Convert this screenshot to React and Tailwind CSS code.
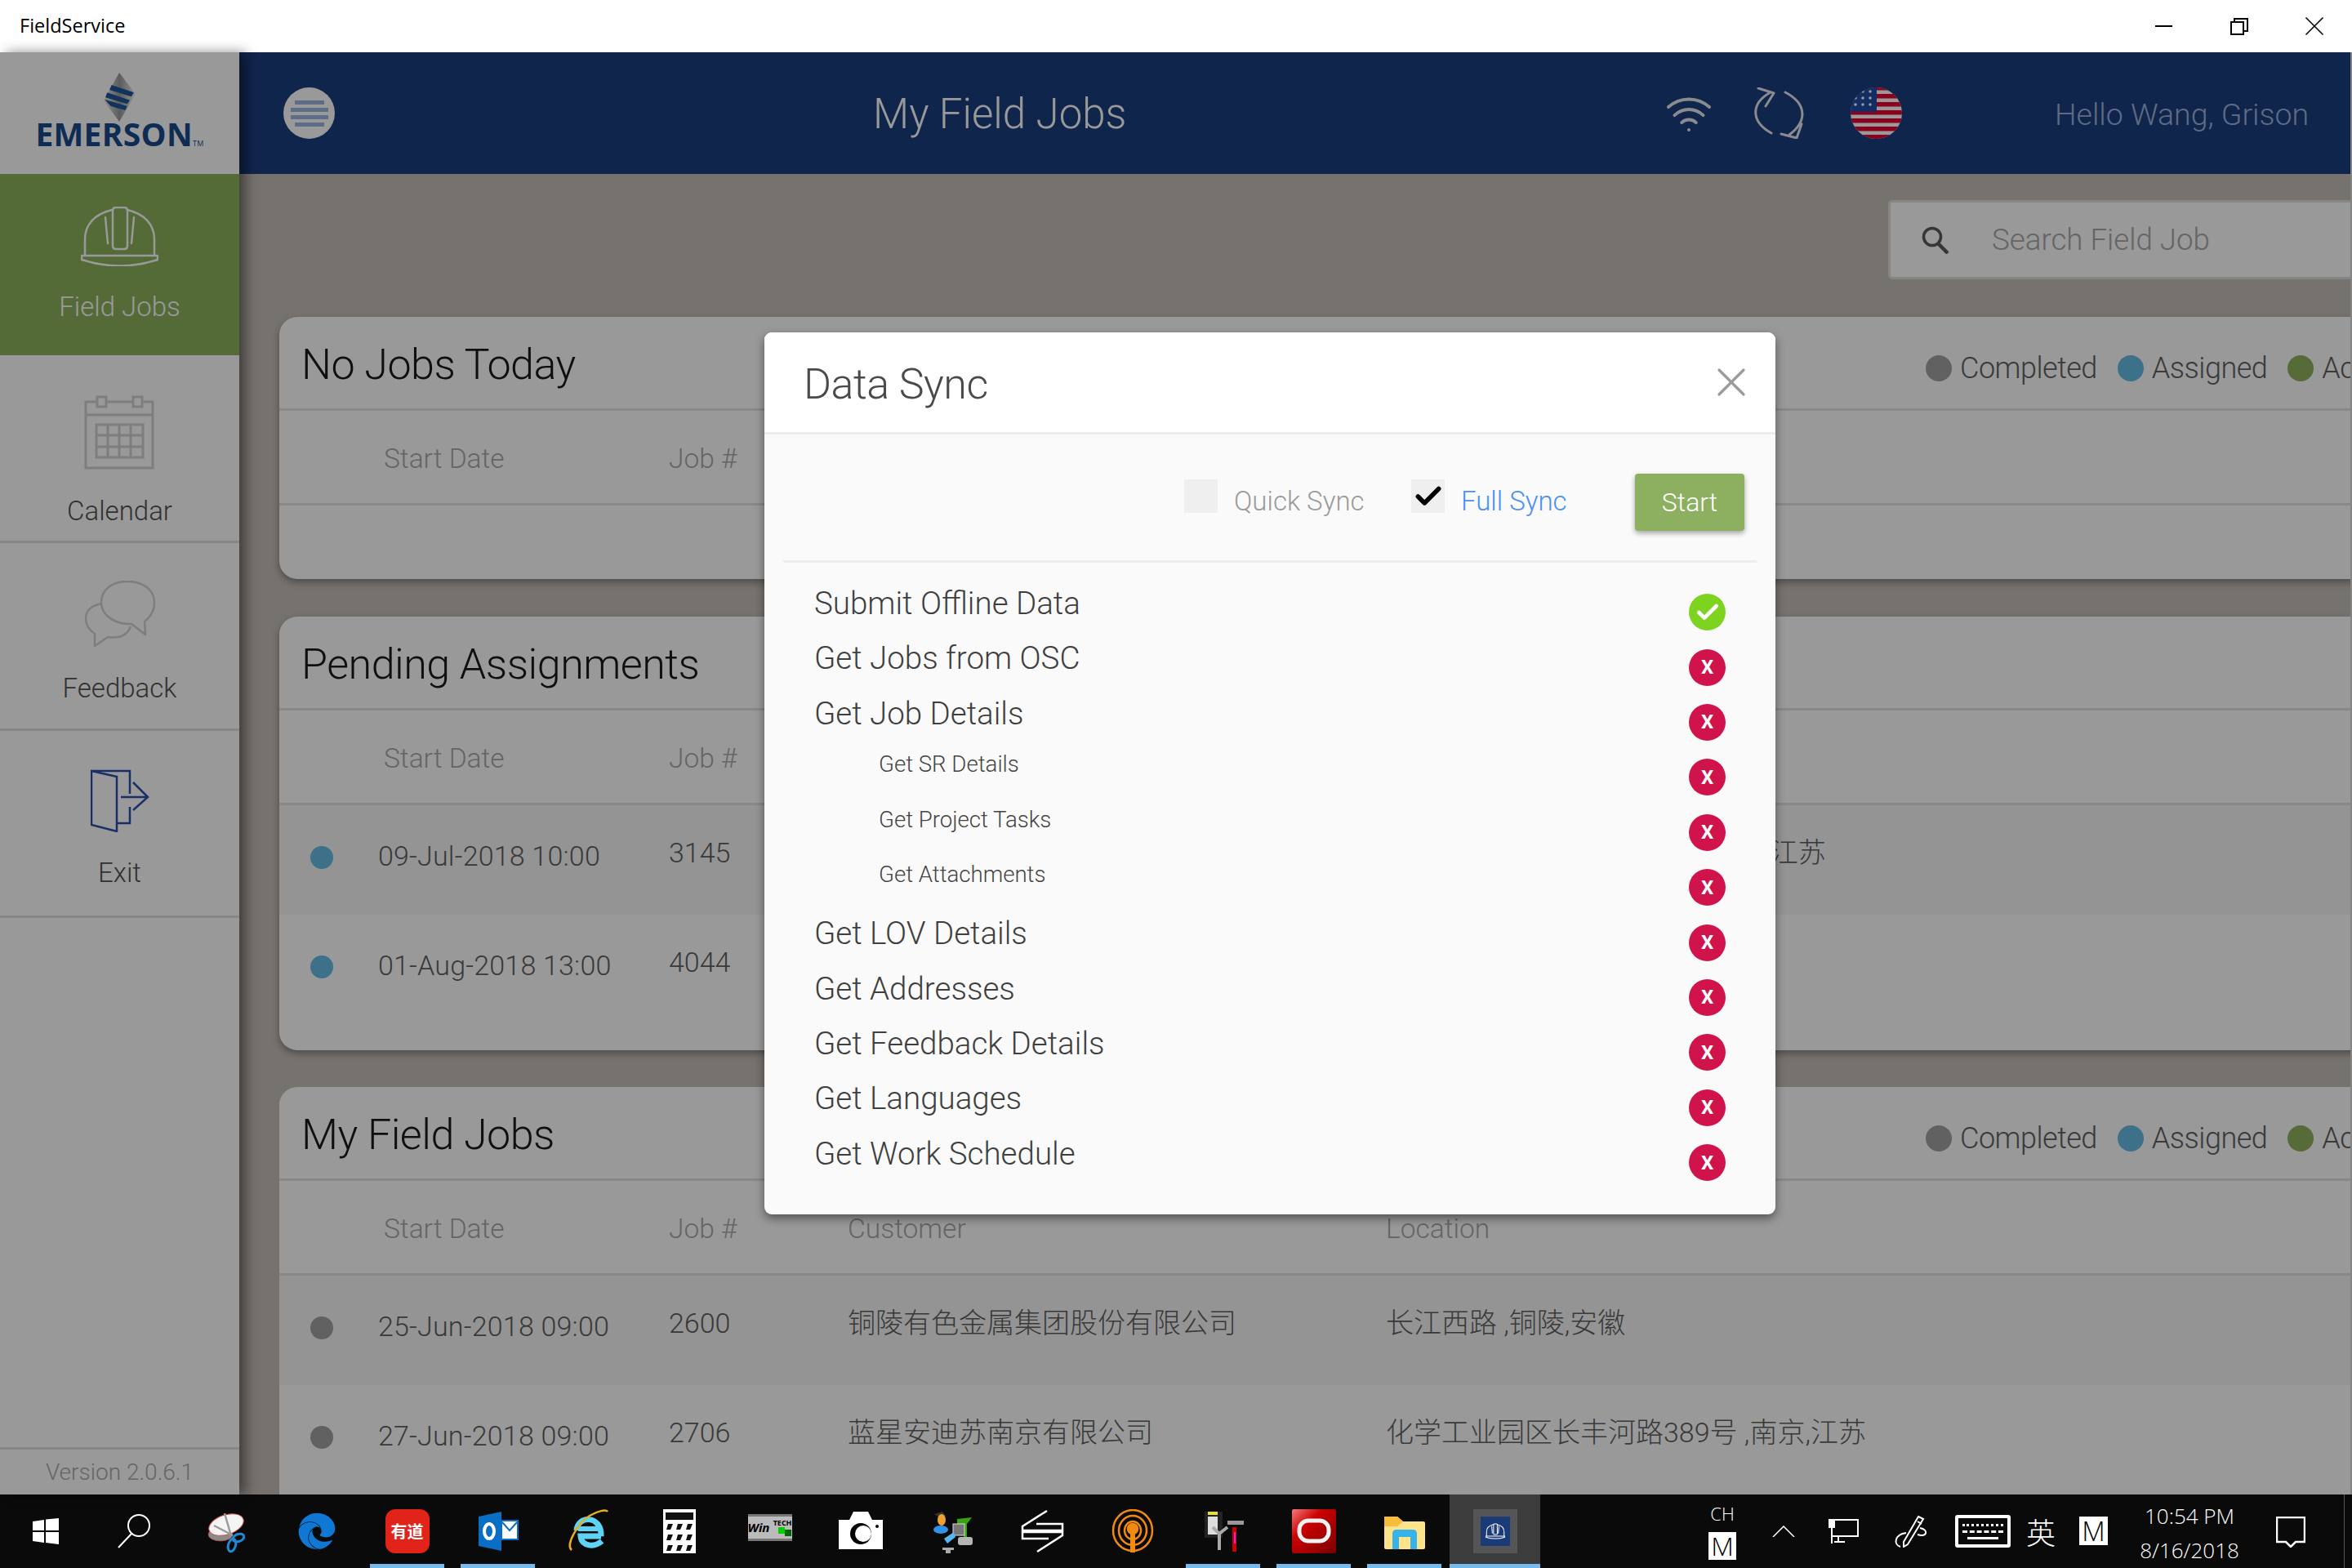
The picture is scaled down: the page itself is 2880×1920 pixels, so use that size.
import { Check, X, Wifi } from 'lucide-react';
import { FaEdge } from 'react-icons/fa';

const Hat = ({ className = 'w-[95px] h-[73px]', stroke = '#fff', sw = 2.5 }) => (
  <svg viewBox="0 0 95 73" className={className} fill="none" stroke={stroke} strokeWidth={sw} strokeLinecap="round" strokeLinejoin="round">
    <path d="M5 59 V40 C5 22 17 9 38 4 M57 4 C78 9 90 22 90 40 V59" />
    <path d="M39 48 V5 Q39 1 43 1 H53 Q57 1 57 5 V48 Q57 52 53 52 H43 Q39 52 39 48 Z" />
    <path d="M30 13 L33 45 M65 13 L62 45" />
    <path d="M1 60 H94 V65 Q48 80 1 65 Z" />
  </svg>
);

const CalendarIcon = () => (
  <svg viewBox="0 0 87 91" className="w-[87px] h-[91px]" fill="none" stroke="#d2d2d2" strokeWidth="3">
    <path d="M2 8 H84 V89 H2 Z M2 24 H84" />
    <path d="M16 2 H27 V14 H16 Z M60 2 H71 V14 H60 Z" fill="#fff" />
    <path d="M15 36 H72 V76 H15 Z M29 36 V76 M43 36 V76 M57 36 V76 M15 49 H72 M15 63 H72" />
  </svg>
);

const FeedbackIcon = () => (
  <svg viewBox="0 0 86 82" className="w-[86px] h-[82px]" fill="none" stroke="#d2d2d2" strokeWidth="2.5" strokeLinejoin="round">
    <path d="M21 28 C8 30 1 37 1 46 C1 55 6 61 12 65 L12 80 L28 69 C42 71 52 67 56 56" />
    <path d="M52 1 C33 1 20 11 20 27 C20 43 38 54 57 53 L74 66 L73 50 C81 44 85 36 85 27 C85 11 71 1 52 1 Z" />
  </svg>
);

const ExitIcon = () => (
  <svg viewBox="0 0 72 77" className="w-[72px] h-[77px]" fill="none" stroke="#2b4fae" strokeWidth="2.5">
    <path d="M1 2 L32 9 V76 L1 68 Z" />
    <path d="M1 2 H48 V30 M48 46 V66 H32" />
    <path d="M37 34 H70 M52 16 L70 34 L52 50" />
  </svg>
);

const SyncIcon = () => (
  <svg viewBox="0 0 62 63" className="w-[62px] h-[63px]" fill="none" stroke="#e4e8f0" strokeWidth="3" strokeLinecap="round" strokeLinejoin="round">
    <path d="M21 6 C-4 20 -3 42 22 56 M6 1 L25 7 L15 23" />
    <path d="M39 6 C66 20 66 42 44 58 M34 57 L53 62 L59 45" />
  </svg>
);

const FlagIcon = () => (
  <svg viewBox="0 0 63 63" className="w-[63px] h-[63px]">
    <defs><clipPath id="flagclip"><circle cx="31.5" cy="31.5" r="31.5" /></clipPath></defs>
    <g clipPath="url(#flagclip)">
      <rect width="63" height="63" fill="#fff" />
      {[0, 10, 20, 30, 40, 50, 60].map((y) => (<rect key={y} y={y - 2} width="63" height="5.5" fill="#e8002f" />))}
      <rect y="-2" width="32" height="32" fill="#1f4da8" />
      {[6, 15, 24].map((x) => [5, 13, 21].map((y) => (<circle key={x + '-' + y} cx={x} cy={y} r="1.8" fill="#fff" />)))}
    </g>
  </svg>
);

const Legend = () => (
  <div className="flex items-center pt-[14px] text-[36px] text-[#616161] tracking-[-0.5px]">
    <span className="w-[32px] h-[32px] rounded-full bg-[#a2a2a2] mr-[10px]" />
    <span className="mr-[25px]">Completed</span>
    <span className="w-[32px] h-[32px] rounded-full bg-[#66bbe4] mr-[10px]" />
    <span className="mr-[25px]">Assigned</span>
    <span className="w-[32px] h-[32px] rounded-full bg-[#8fb25d] mr-[10px]" />
    <span className="whitespace-nowrap">Active</span>
  </div>
);

const CardTitle = ({ title, legend }) => (
  <div className="h-[115px] flex items-center border-b-[3px] border-[#e3e3e3]">
    <h2 className="w-[2016px] pl-[27px] pt-[6px] text-[52px] text-[#1a1a1a] tracking-[-0.5px]">{title}</h2>
    {legend && <Legend />}
  </div>
);

const TableHead = ({ full }) => (
  <div className="h-[116px] flex items-center pt-[6px] border-b-[3px] border-[#e3e3e3] text-[33.5px] text-[#a8a8a8]">
    <div className="w-[121px]" />
    <div className="w-[356px] pl-[7px]">Start Date</div>
    <div className="w-[219px]">Job #</div>
    {full && <div className="w-[659px]">Customer</div>}
    {full && <div>Location</div>}
  </div>
);

const JobRow = ({ dot, date, job, customer, location, even }) => (
  <div className={even ? 'h-[134px] flex items-center text-[34px] text-[#5f5f5f] bg-[#ffffff]' : 'h-[134px] flex items-center text-[34px] text-[#5f5f5f] bg-[#f7f7f7]'}>
    <div className="w-[121px] flex justify-center pr-[18px] pb-[6px]">
      <span className={'w-[28px] h-[28px] rounded-full ' + dot} />
    </div>
    <div className="w-[356px] pb-[10px] tracking-[0.2px]">{date}</div>
    <div className="w-[219px] pb-[18px]">{job}</div>
    <div className="w-[659px] pb-[18px] whitespace-nowrap">{customer}</div>
    <div className="pb-[18px] whitespace-nowrap">{location}</div>
  </div>
);

const NavItem = ({ icon, active, h, gap }) => (
  <div className={active ? 'flex flex-col items-center bg-[#8eb25d] text-white' : 'flex flex-col items-center border-b-[3px] border-[#e2e2e2] text-[#525252]'} style={{ height: h, paddingTop: gap }}>
    {icon}
  </div>
);

const StatusDot = ({ ok }) => (
  <span className={ok ? 'w-[45px] h-[45px] rounded-full bg-[#7ed321] flex items-center justify-center' : 'w-[45px] h-[45px] rounded-full bg-[#d0134a] flex items-center justify-center'}>
    {ok ? <Check className="w-[32px] h-[32px] text-white" strokeWidth={3.5} /> : <span className="text-[24px] font-bold text-white leading-none">X</span>}
  </span>
);

const steps = [
  ['Submit Offline Data', false, true],
  ['Get Jobs from OSC'],
  ['Get Job Details'],
  ['Get SR Details', true],
  ['Get Project Tasks', true],
  ['Get Attachments', true],
  ['Get LOV Details'],
  ['Get Addresses'],
  ['Get Feedback Details'],
  ['Get Languages'],
  ['Get Work Schedule'],
];

const SyncModal = () => (
  <div className="absolute left-[936px] top-[343px] w-[1238px] h-[1080px] rounded-[9px] bg-[#fafafa] shadow-[0_5px_12px_rgba(0,0,0,0.45)] overflow-hidden">
    <div className="h-[125px] bg-white border-b-[3px] border-[#ececec] flex items-center justify-between pl-[48px] pr-[24px]">
      <h3 className="pt-[6px] text-[52px] text-[#4a4a4a] tracking-[-0.5px]">Data Sync</h3>
      <X className="w-[60px] h-[60px] text-[#9b9b9b]" strokeWidth={1.3} />
    </div>
    <div className="mx-[23px] h-[157px] border-b-[3px] border-[#ececec] flex items-center">
      <div className="ml-[491px] mb-[3px] w-[41px] h-[41px] bg-[#efefef]" />
      <span className="ml-[20px] mt-[10px] w-[217px] text-[33px] text-[#9b9b9b]">Quick Sync</span>
      <div className="mb-[3px] w-[41px] h-[41px] bg-[#efefef] flex items-center justify-center">
        <Check className="w-[38px] h-[38px] text-black" strokeWidth={3.5} />
      </div>
      <span className="ml-[20px] mt-[10px] w-[213px] text-[33px] text-[#4a90f7]">Full Sync</span>
      <button className="mt-[12px] w-[134px] h-[70px] rounded-[4px] bg-[#8db060] text-white text-[32px] shadow-[0_3px_6px_rgba(0,0,0,0.35)]">Start</button>
    </div>
    <div className="pt-[27px] pl-[61px] pr-[61px]">
      {steps.map(([name, sub, ok]) => (
        <div key={name} className="h-[67.4px] flex items-center justify-between">
          {sub
            ? <span className="pl-[79px] pb-[32px] text-[27.6px] text-[#444]">{name}</span>
            : <span className="pb-[22px] text-[38.5px] text-[#3f3f3f]">{name}</span>}
          <StatusDot ok={ok} />
        </div>
      ))}
    </div>
  </div>
);

// taskbar icons, all in a 54 box
const ic = 'w-[54px] h-[54px]';
const tbIcons = [
  <svg key="win" viewBox="0 0 54 54" className={ic} fill="#fff"><path d="M12 15 L26 13 V26 H12 Z M28 12.6 L44 11 V26 H28 Z M12 28 H26 V41 L12 39 Z M28 28 H44 V43 L28 41 Z" /></svg>,
  <svg key="search" viewBox="0 0 54 54" className={ic} fill="none" stroke="#fff" strokeWidth="2"><circle cx="31" cy="20" r="13" /><path d="M22 30 L6 47" /></svg>,
  <svg key="snip" viewBox="0 0 54 54" className={ic}>
    <ellipse cx="20" cy="31" rx="15" ry="8" fill="#8b8b8b" stroke="#b33" strokeWidth="0.7" />
    <ellipse cx="27" cy="19" rx="22" ry="12" transform="rotate(-18 27 19)" fill="#f4f4f4" stroke="#d6443e" />
    <path d="M12 20 L35 32 M25 5 L32 29" stroke="#9a9a9a" strokeWidth="2.5" />
    <ellipse cx="42" cy="35" rx="7" ry="4.5" transform="rotate(-20 42 35)" fill="none" stroke="#1c8ad6" strokeWidth="3" />
    <ellipse cx="34" cy="44" rx="4.5" ry="8" transform="rotate(15 34 44)" fill="none" stroke="#1c8ad6" strokeWidth="3" />
  </svg>,
  <FaEdge key="edge" className="w-[46px] h-[50px] mx-[4px] text-[#0f78d4]" />,
  <div key="yd" className="w-[54px] h-[54px] rounded-[12px] bg-[#e2231a] flex items-center justify-center text-white text-[20px] font-bold font-['Noto_Sans_CJK_SC'] leading-none whitespace-nowrap">有道</div>,
  <svg key="ol" viewBox="0 0 54 54" className={ic}>
    <path d="M3 9 L31 3 V51 L3 45 Z" fill="#0a6fc4" />
    <path d="M31 14 H51 V37 H31 Z" fill="#fff" stroke="#0a6fc4" strokeWidth="2" /><path d="M32 16 L41 26 L50 16" fill="none" stroke="#0a6fc4" strokeWidth="2" />
    <ellipse cx="16" cy="27" rx="6" ry="9" fill="none" stroke="#fff" strokeWidth="4" />
  </svg>,
  <svg key="ie" viewBox="0 0 54 54" className={ic} fill="none">
    <path d="M42 33 H17 C18 46 34 47 43 39 M12 26 C13 7 43 7 42 33" stroke="#5ed3f5" strokeWidth="7" />
    <path d="M14 24 H40" stroke="#5ed3f5" strokeWidth="6" />
    <path d="M6 50 C-2 44 14 16 28 8 C38 2 48 0 50 3" stroke="#e6ad1f" strokeWidth="2.5" />
  </svg>,
  <svg key="calc" viewBox="0 0 54 54" className={ic}>
    <rect x="7" width="40" height="54" fill="#fff" />
    <rect x="10" y="4" width="34" height="9" fill="#111" />
    {[18, 31, 44].map((y) => [11, 23, 35].map((x) => (<path key={x + '-' + y} d={`M${x + 2} ${y} h6 l-3 7 h-5 Z`} fill="#111" />)))}
  </svg>,
  <div key="wt" className="w-[54px] h-[33px] mb-[10px] bg-[#bbb] border-y-[3px] border-[#777] flex items-center text-black text-[11px] font-bold leading-none overflow-hidden">
    <span className="italic text-[15px]">Win</span>
    <span className="flex flex-col items-end flex-1">
      <span className="text-[9px]">TECH</span>
      <span className="flex mt-[1px] mr-[1px]">
        <span className="w-[8px] h-[8px] bg-[#00d000]" />
        <span className="mt-[3px] w-[8px] h-[8px] bg-[#006a00]" />
      </span>
    </span>
  </div>,
  <svg key="cam" viewBox="0 0 54 54" className={ic}><path d="M0 13 H13 L18 3 H36 L41 13 H54 V49 H0 Z" fill="#fff" /><circle cx="27" cy="30" r="13" fill="#000" /><circle cx="30" cy="30" r="10" fill="#fff" /><circle cx="47" cy="21" r="2" fill="#000" /></svg>,
  <svg key="multi" viewBox="0 0 54 54" className={ic}>
    <path d="M6 6 L16 3 L20 8 L12 10 Z" fill="#333" />
    <ellipse cx="15" cy="13" rx="5" ry="7" fill="#f0a030" />
    <ellipse cx="14" cy="25" rx="9" ry="5" fill="#2e93e6" />
    <path d="M34 12 L52 10 L46 18 V34 H42 V20 L34 18 Z" fill="#3aa312" />
    <rect x="29" y="18" width="14" height="14" fill="#777" stroke="#ddd" />
    <path d="M18 36 L30 28 L32 34 L22 42 Z" fill="#58b6ee" />
    <rect x="35" y="34" width="18" height="10" rx="3" fill="#b5b5b5" />
    <path d="M16 47 H30 V50 H26 V54 H20 V50 H16 Z" fill="#aaa" />
  </svg>,
  <svg key="arrows" viewBox="0 0 54 54" className={ic} fill="none" stroke="#fff" strokeWidth="2.5"><path d="M33 2 L3 21 V26 H52 V18 H20 M21 52 L52 32 V28 H3 V36 H35" /></svg>,
  <svg key="pod" viewBox="0 0 54 54" className={ic} fill="none" stroke="#f08a10" strokeWidth="2.5"><ellipse cx="27" cy="26" rx="24" ry="25" /><ellipse cx="27" cy="26" rx="17" ry="18" /><ellipse cx="27" cy="26" rx="10" ry="11" /><path d="M27 53 L27 28" strokeWidth="6" /><circle cx="27" cy="24" r="6" fill="#f08a10" /></svg>,
  <svg key="tool" viewBox="0 0 54 54" className={ic}>
    <rect x="4" y="3" width="22" height="32" fill="#222" /><rect x="8" y="3" width="12" height="4" fill="#e8e030" /><rect x="8" y="9" width="12" height="22" fill="#ddd" />
    <path d="M22 50 V30 L14 22 M22 30 L32 22" stroke="#aaa" strokeWidth="4" fill="none" /><rect x="38" y="22" width="5" height="30" fill="#c00" /><rect x="40" y="28" width="2" height="14" fill="#e020e0" /><rect x="32" y="14" width="20" height="5" fill="#999" />
  </svg>,
  <svg key="ora" viewBox="0 0 54 54" className={ic}><defs><linearGradient id="oraBg" x1="0" y1="0" x2="1" y2="1"><stop offset="0" stopColor="#f57a7a" /><stop offset="0.35" stopColor="#c90000" /><stop offset="1" stopColor="#7a0000" /></linearGradient></defs><rect width="54" height="54" rx="2" fill="url(#oraBg)" /><rect x="9" y="14" width="36" height="25" rx="11" fill="none" stroke="#f2f2f2" strokeWidth="5" /></svg>,
  <svg key="folder" viewBox="0 0 54 54" className={ic}><path d="M2 9 H18 L25 15 H50 Q52 15 52 17 V47 Q52 49 50 49 H4 Q2 49 2 47 Z" fill="#ffe38a" /><path d="M2 9 H18 L25 15 L18 21 H2 Z" fill="#f7bd3a" /><path d="M12 49 V30 Q12 25 17 25 H37 Q42 25 42 30 V49 H34 V34 H20 V49 Z" fill="#38b3ea" /></svg>,
  <div key="app" className="w-[54px] h-[54px] bg-[#555] flex items-center justify-center"><div className="w-[36px] h-[36px] bg-[#1b3a78] flex items-center justify-center"><Hat className="w-[24px] h-[20px]" sw={4} /></div></div>,
];

const Taskbar = () => (
  <div className="h-[90px] bg-[#0a0a0a] flex text-white font-['Open_Sans'] relative">
    {tbIcons.map((icon, i) => {
      const running = [4, 5, 13, 14, 15, 16].includes(i);
      const current = i === 16;
      return (
        <div key={i} className={(i === 0 ? 'w-[110px]' : 'w-[111px]') + (current ? ' bg-[#3c3c3c]' : '') + ' h-full flex items-center justify-center relative shrink-0'}>
          {icon}
          {running && <span className={(current ? 'left-0 right-0' : 'left-[10px] right-[10px]') + ' absolute bottom-0 h-[5px] bg-[#76b9ed]'} />}
        </div>
      );
    })}
    <div className="ml-[205px] w-[36px] flex flex-col items-center pt-[12px]">
      <span className="text-[22px] leading-[22px]">CH</span>
      <span className="mt-[12px] w-[34px] h-[34px] bg-white text-black text-[32px] leading-[34px] text-center">M</span>
    </div>
    <svg viewBox="0 0 28 14" className="ml-[43px] mt-[38px] w-[28px] h-[14px]" fill="none" stroke="#fff" strokeWidth="1.5"><path d="M1 14 L14 1 L27 14" /></svg>
    <svg viewBox="0 0 37 30" className="ml-[41px] mt-[30px] w-[37px] h-[30px]" fill="none" stroke="#fff" strokeWidth="2"><path d="M4 1 H36 V21 H4 M4 1 V30 M12 22 V28 M7 28 H20" /><rect x="1" y="1" width="6" height="9" fill="#fff" /></svg>
    <svg viewBox="0 0 42 40" className="ml-[42px] mt-[25px] w-[42px] h-[40px]" fill="none" stroke="#fff" strokeWidth="2"><path d="M31 2 L37 5 L18 36 L13 39 L13 33 Z M30 8 L35 11" /><path d="M33 16 C44 18 42 28 30 24 M16 22 C2 24 0 36 9 39" /></svg>
    <div className="ml-[34px] mt-[25px] w-[68px] h-[40px] border-[4px] border-white rounded-[3px] flex flex-col justify-center gap-[5px] px-[5px]">
      <span className="h-[3px] border-t-[3px] border-dotted border-white" />
      <span className="h-[3px] border-t-[3px] border-dashed border-white" />
      <span className="h-[3px] bg-white mx-[6px]" />
    </div>
    <span className="ml-[19px] mt-[23px] text-[36px] leading-[44px] font-['Noto_Sans_CJK_SC']">英</span>
    <span className="ml-[29px] mt-[27px] w-[35px] h-[35px] bg-white text-black text-[33px] leading-[35px] text-center">M</span>
    <div className="ml-[35px] w-[130px] flex flex-col items-center pt-[12px] gap-[14px] text-[26px] leading-[28px] whitespace-nowrap">
      <span>10:54 PM</span>
      <span>8/16/2018</span>
    </div>
    <svg viewBox="0 0 36 38" className="ml-[41px] mt-[27px] w-[36px] h-[38px]" fill="none" stroke="#fff" strokeWidth="2.5"><path d="M1 1 H35 V31 H24 L18 37 L12 31 H1 Z" /></svg>
    <span className="absolute right-[9px] top-0 h-full w-[1px] bg-[#555]" />
  </div>
);

export default function App() {
  return (
    <div className="w-[2880px] h-[1920px] flex flex-col overflow-hidden bg-white font-[Roboto,'Noto_Sans_CJK_SC',sans-serif] font-light">
      {/* title bar */}
      <div className="h-[64px] flex items-center bg-white text-black">
        <span className="ml-[24px] text-[23.5px] font-normal font-['Open_Sans']">FieldService</span>
        <div className="ml-auto flex items-center">
          <span className="w-[21px] h-[2px] bg-black mr-[71px]" />
          <svg viewBox="0 0 22 21" className="w-[22px] h-[21px] mr-[61px]" fill="none" stroke="#000" strokeWidth="2"><path d="M1 5 H16 V20 H1 Z M5 5 V1 H21 V16 H16" /></svg>
          <X className="w-[40px] h-[40px] mr-[26px] text-black" strokeWidth={1} />
        </div>
      </div>

      <div className="relative h-[1766px] flex bg-[#c5beb8]">
        {/* sidebar */}
        <aside className="w-[293px] shrink-0 bg-white flex flex-col relative z-10 shadow-[8px_0_14px_rgba(0,0,0,0.45)] text-[33px]">
          <div className="h-[149px] flex flex-col items-center pt-[25px] relative">
            <svg viewBox="0 0 39 60" className="w-[39px] h-[60px]">
              <defs><linearGradient id="logoBg" x1="0" y1="0" x2="1" y2="0"><stop offset="0" stopColor="#f0f0f0" /><stop offset="0.5" stopColor="#9a9a9a" /><stop offset="1" stopColor="#f5f5f5" /></linearGradient></defs>
              <path d="M19 0 L39 26 L19 60 L0 34 Z" fill="url(#logoBg)" />
              <path d="M9.7 15 L37 24.3 L33.7 29.3 L7 21 Z M4.3 24.3 L32 33.7 L28.7 38.3 L2 30.3 Z M1 32.7 L28.7 41 L26.3 46 L8.7 41 Z" fill="#1f5598" />
            </svg>
            <span className="text-[39px] leading-[30px] font-bold font-['Open_Sans'] text-[#1a4a8c] tracking-[0.3px]">EMERSON<span className="text-[9px] font-normal">TM</span></span>
          </div>
          <NavItem active h="222px" gap="40px" icon={<><Hat /><span className="mt-[30px] leading-[40px]">Field Jobs</span></>} />
          <NavItem h="230px" gap="49px" icon={<><CalendarIcon /><span className="mt-[31px] leading-[40px]">Calendar</span></>} />
          <NavItem h="230px" gap="46px" icon={<><FeedbackIcon /><span className="mt-[30px] leading-[40px]">Feedback</span></>} />
          <NavItem h="229px" gap="47px" icon={<><ExitIcon /><span className="mt-[30px] leading-[40px]">Exit</span></>} />
          <div className="mt-auto h-[58px] border-t-[3px] border-[#e2e2e2] flex items-center justify-center text-[28px] text-[#aaa]">Version 2.0.6.1</div>
        </aside>

        {/* content */}
        <div className="w-[2585px] shrink-0 flex flex-col overflow-hidden">
          <header className="h-[149px] shrink-0 flex items-center bg-[#1c3e7f] text-white">
            <div className="ml-[54px] w-[63px] h-[63px] rounded-full bg-white flex flex-col items-center justify-center gap-[4px]">
              <span className="w-[36px] h-[5px] bg-[#9bb4e1]" />
              <span className="w-[46px] h-[5px] bg-[#9bb4e1]" />
              <span className="w-[46px] h-[5px] bg-[#9bb4e1]" />
              <span className="w-[36px] h-[5px] bg-[#9bb4e1]" />
            </div>
            <h1 className="ml-[659px] w-[969px] pt-[3px] text-[51px]">My Field Jobs</h1>
            <Wifi className="w-[60px] h-[60px] text-[#e4e8f0]" strokeWidth={1.6} />
            <div className="ml-[49px]"><SyncIcon /></div>
            <div className="ml-[57px]"><FlagIcon /></div>
            <span className="ml-[187px] pt-[3px] text-[37.5px] text-[#9db3dc] whitespace-nowrap">Hello Wang, Grison</span>
          </header>

          <div className="pt-[32px] flex flex-col items-start">
            <div className="ml-[2019px] w-[600px] h-[97px] flex items-center bg-white rounded-[5px] border-[3px] border-[#e0e0e0] shrink-0">
              <svg viewBox="0 0 34 34" className="ml-[38px] w-[34px] h-[34px]" fill="none" stroke="#5a5a5a" strokeWidth="3.6"><circle cx="13" cy="13" r="10.5" /><path d="M20 21 L32 33" strokeWidth="4.5" /></svg>
              <span className="ml-[52px] text-[36.7px] text-[#a8a8a8]">Search Field Job</span>
            </div>

            <section className="ml-[49px] mt-[46px] w-[2600px] h-[321px] bg-white rounded-[22px] shadow-[0_4px_8px_rgba(0,0,0,0.35)] shrink-0">
              <CardTitle title="No Jobs Today" legend />
              <TableHead />
            </section>

            <section className="ml-[49px] mt-[46px] w-[2600px] h-[531px] bg-white rounded-[22px] overflow-hidden shadow-[0_4px_8px_rgba(0,0,0,0.35)] shrink-0">
              <CardTitle title="Pending Assignments" />
              <TableHead />
              <JobRow dot="bg-[#66bbe4]" date="09-Jul-2018 10:00" job="3145" location="南京化学工业园区3890号 ,南京,江苏" />
              <JobRow dot="bg-[#66bbe4]" date="01-Aug-2018 13:00" job="4044" even />
            </section>

            <section className="ml-[49px] mt-[45px] w-[2600px] h-[520px] bg-white rounded-t-[22px] overflow-hidden shrink-0">
              <CardTitle title="My Field Jobs" legend />
              <TableHead full />
              <JobRow dot="bg-[#a2a2a2]" date="25-Jun-2018 09:00" job="2600" customer="铜陵有色金属集团股份有限公司" location="长江西路 ,铜陵,安徽" />
              <JobRow dot="bg-[#a2a2a2]" date="27-Jun-2018 09:00" job="2706" customer="蓝星安迪苏南京有限公司" location="化学工业园区长丰河路389号 ,南京,江苏" even />
            </section>
          </div>
        </div>
        <div className="flex-1 bg-[#ddd]" />

        {/* dimming layer and the dialog above it */}
        <div className="absolute inset-0 z-20 bg-black/40" />
        <div className="absolute inset-0 z-30">
          <SyncModal />
        </div>
      </div>

      <Taskbar />
    </div>
  );
}
